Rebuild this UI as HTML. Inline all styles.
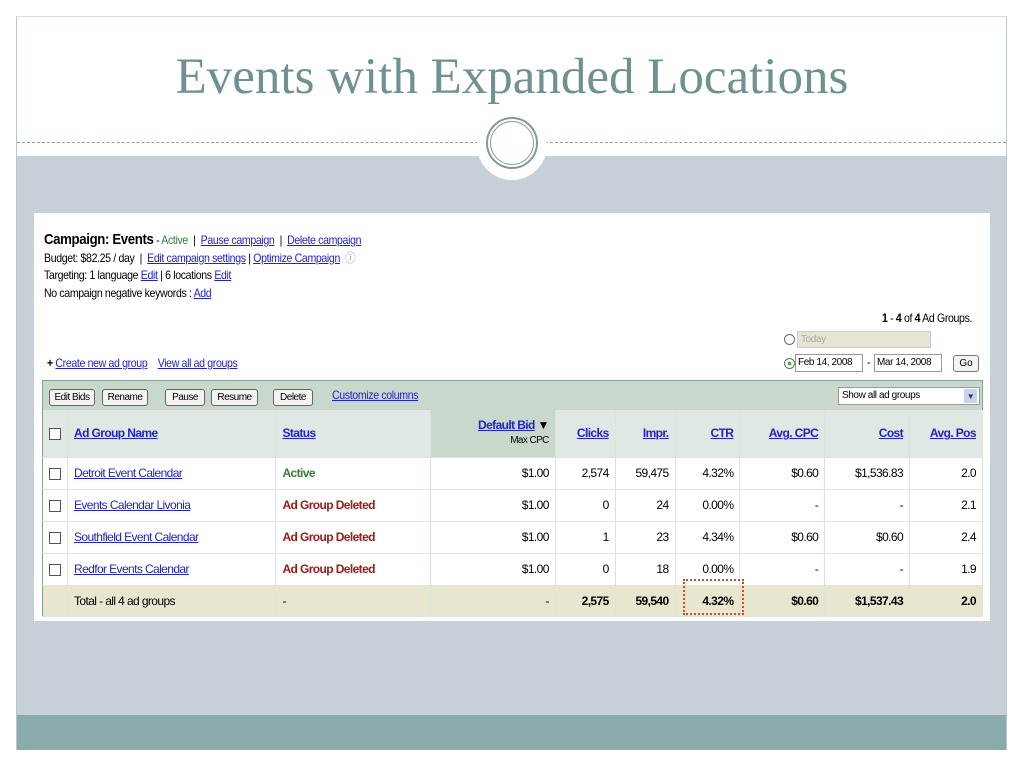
<!DOCTYPE html>
<html><head><meta charset="utf-8"><style>
*{margin:0;padding:0;box-sizing:border-box}
body{width:1024px;height:768px;background:#fff;position:relative;overflow:hidden;font-family:"Liberation Sans",sans-serif;}
.abs{position:absolute}
.frame{left:16px;top:16px;width:991px;height:734px;border-left:1px solid #b9c6c9;border-right:1px solid #b9c6c9;border-top:1px solid #d8e0e2}
h1{position:absolute;left:0;width:1024px;top:48px;text-align:center;font:400 51px "Liberation Serif",serif;color:#6f9191;white-space:nowrap}
.grey{left:17px;top:156px;width:989px;height:559px;background:#c5d1d6}
.dark{left:17px;top:715px;width:989px;height:35px;background:#8aabab}
.dash{top:142px;height:0;border-top:1px dashed #8aa3a5}
a,.l{color:#2222cc;text-decoration:underline}
.panel{left:34px;top:213px;width:956px;height:408px;background:#fff}
.t{font-size:12px;color:#000;line-height:17.5px;letter-spacing:-0.4px;transform:scaleX(0.88);transform-origin:left top;white-space:nowrap}
table{border-collapse:collapse;position:absolute;left:42px;top:410px;width:941px;font-size:12px;letter-spacing:-0.6px}
td{height:32px;border-right:1px solid #dde3dd;border-bottom:1px solid #dde3dd;padding:0 6px;white-space:nowrap}
tr.h td{height:47px;background:#dfe8e2;font-weight:bold}
.r{text-align:right}
.cb{display:inline-block;width:12px;height:12px;border:1px solid #555;background:#fff;vertical-align:middle}
.btn{position:absolute;top:389px;height:17px;border:1px solid #666;border-radius:3px;background:#f4f4f4;font-size:10px;letter-spacing:-0.5px;text-align:center;line-height:15px;white-space:nowrap}
.red{color:#a01818;font-weight:bold}
.grn{color:#3a7a3a;font-weight:bold}
tr.tot td{background:#e8e6cf;height:31px}
.inp{font-size:10px;letter-spacing:-0.4px;white-space:nowrap;overflow:hidden}
</style></head><body>
<div class="abs frame"></div>
<h1>Events with Expanded Locations</h1>
<div class="abs dash" style="left:17px;width:466px"></div>
<div class="abs dash" style="left:540px;width:466px"></div>
<div class="abs grey"></div>
<div class="abs dark"></div>
<div class="abs" style="left:477px;top:110px;width:70px;height:70px;border-radius:50%;background:#fff"></div>
<div class="abs" style="left:486px;top:117px;width:52px;height:52px;border-radius:50%;border:2px solid #7f9a9c"></div>
<div class="abs" style="left:490px;top:121px;width:44px;height:44px;border-radius:50%;border:1.5px solid #7f9a9c"></div>
<div class="abs panel"></div>
<div class="abs t" style="left:44px;top:231px"><b style="font-size:15px">Campaign: Events</b> - <span style="color:#3a7a3a">Active</span> &nbsp;| &nbsp;<a>Pause campaign</a> &nbsp;| &nbsp;<a>Delete campaign</a><br>
Budget: $82.25 / day &nbsp;| &nbsp;<a>Edit campaign settings</a> | <a>Optimize Campaign</a> &nbsp;<span style="color:#88a">&#9432;</span><br>
Targeting: 1 language <a>Edit</a> | 6 locations <a>Edit</a><br>
No campaign negative keywords : <a>Add</a></div>
<div class="abs t" style="left:882px;top:310px"><b>1</b> - <b>4</b> of <b>4</b> Ad Groups.</div>
<div class="abs" style="left:784px;top:334px;width:11px;height:11px;border-radius:50%;border:1px solid #667"></div>
<div class="abs inp" style="left:797px;top:331px;width:134px;height:17px;background:#e8e4d4;border:1px solid #ccc;color:#aaa;padding-left:3px;line-height:15px">Today</div>
<div class="abs" style="left:784px;top:358px;width:11px;height:11px;border-radius:50%;border:1px solid #667;background:radial-gradient(#4a4 25%,#fff 35%)"></div>
<div class="abs inp" style="left:795px;top:354px;width:68px;height:18px;border:1px solid #999;line-height:16px;padding-left:2px">Feb 14, 2008</div>
<div class="abs t" style="left:867px;top:354px">-</div>
<div class="abs inp" style="left:874px;top:354px;width:68px;height:18px;border:1px solid #999;line-height:16px;padding-left:2px">Mar 14, 2008</div>
<div class="abs" style="left:953px;top:355px;width:26px;height:17px;border:1px solid #777;border-radius:3px;background:#f4f4f4;font-size:10px;text-align:center;line-height:15px">Go</div>
<div class="abs t" style="left:47px;top:355px"><b>+</b> <a>Create new ad group</a> &nbsp;&nbsp;&nbsp;<a>View all ad groups</a></div>
<div class="abs" style="left:42px;top:380px;width:941px;height:30px;background:#c9d8cc;border:1px solid #8aa090;border-bottom:none"></div>
<div class="btn" style="left:49px;width:46px">Edit Bids</div>
<div class="btn" style="left:102px;width:46px">Rename</div>
<div class="btn" style="left:165px;width:40px">Pause</div>
<div class="btn" style="left:211px;width:47px">Resume</div>
<div class="btn" style="left:273px;width:40px">Delete</div>
<div class="abs t" style="left:332px;top:387px"><a>Customize columns</a></div>
<div class="abs inp" style="left:838px;top:387px;width:142px;height:18px;background:#fff;border:1px solid #999;line-height:16px;padding-left:3px">Show all ad groups<span style="position:absolute;right:2px;top:1px;width:13px;height:14px;background:#c8d4ee;font-size:8px;text-align:center;color:#336">&#9660;</span></div>
<table style="border-left:1px solid #8aa090;border-right:1px solid #8aa090;border-bottom:1px solid #8aa090">
<colgroup><col style="width:24px"><col style="width:209px"><col style="width:155px"><col style="width:125px"><col style="width:60px"><col style="width:60px"><col style="width:65px"><col style="width:85px"><col style="width:85px"><col style="width:73px"></colgroup>
<tr class="h"><td><span class="cb"></span></td><td><a>Ad Group Name</a></td><td><a>Status</a></td><td class="r" style="background:#c9d8cc;line-height:14px"><a>Default Bid</a> &#9660;<br><span style="font-weight:normal;font-size:10px">Max CPC</span></td><td class="r"><a>Clicks</a></td><td class="r"><a>Impr.</a></td><td class="r"><a>CTR</a></td><td class="r"><a>Avg. CPC</a></td><td class="r"><a>Cost</a></td><td class="r"><a>Avg. Pos</a></td></tr>
<tr><td><span class="cb"></span></td><td><a>Detroit Event Calendar</a></td><td class="grn">Active</td><td class="r">$1.00</td><td class="r">2,574</td><td class="r">59,475</td><td class="r">4.32%</td><td class="r">$0.60</td><td class="r">$1,536.83</td><td class="r">2.0</td></tr>
<tr><td><span class="cb"></span></td><td><a>Events Calendar Livonia</a></td><td class="red">Ad Group Deleted</td><td class="r">$1.00</td><td class="r">0</td><td class="r">24</td><td class="r">0.00%</td><td class="r">-</td><td class="r">-</td><td class="r">2.1</td></tr>
<tr><td><span class="cb"></span></td><td><a>Southfield Event Calendar</a></td><td class="red">Ad Group Deleted</td><td class="r">$1.00</td><td class="r">1</td><td class="r">23</td><td class="r">4.34%</td><td class="r">$0.60</td><td class="r">$0.60</td><td class="r">2.4</td></tr>
<tr><td><span class="cb"></span></td><td><a>Redfor Events Calendar</a></td><td class="red">Ad Group Deleted</td><td class="r">$1.00</td><td class="r">0</td><td class="r">18</td><td class="r">0.00%</td><td class="r">-</td><td class="r">-</td><td class="r">1.9</td></tr>
<tr class="tot"><td></td><td>Total - all 4 ad groups</td><td>-</td><td class="r">-</td><td class="r"><b>2,575</b></td><td class="r"><b>59,540</b></td><td class="r"><b>4.32%</b></td><td class="r"><b>$0.60</b></td><td class="r"><b>$1,537.43</b></td><td class="r"><b>2.0</b></td></tr>
</table>
<div class="abs" style="left:683px;top:579px;width:61px;height:36px;border:2px dotted #d04a30"></div>
</body></html>
